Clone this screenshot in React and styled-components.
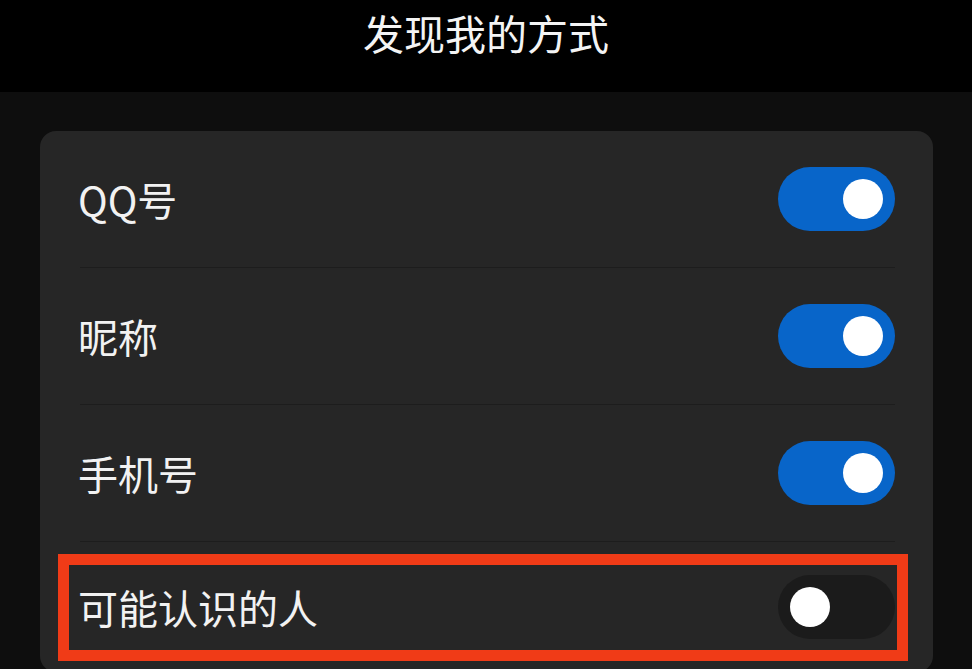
import React from 'react';
import styled, { createGlobalStyle } from 'styled-components';

const GlobalStyle = createGlobalStyle`
  html, body {
    margin: 0;
    padding: 0;
    background: #0e0e0e;
    overflow: hidden;
  }
  body {
    font-family: "Noto Sans CJK SC", "Noto Sans", sans-serif;
  }
`;

const Page = styled.div`
  width: 972px;
  height: 669px;
  background: #0e0e0e;
  overflow: hidden;
`;

const Header = styled.header`
  height: 92px;
  background: #000;
  display: flex;
  justify-content: center;
  align-items: flex-start;
`;

const Title = styled.h1`
  margin: 8px 0 0;
  font-size: 41px;
  font-weight: 400;
  line-height: 48px;
  color: #f4f4f4;
`;

const Body = styled.main`
  padding: 39px 39px 0 40px;
`;

const Card = styled.section`
  background: #262626;
  border-radius: 16px;
`;

const Row = styled.div`
  position: relative;
  height: ${(p) => (p.last ? '130px' : '136px')};
  margin: 0 38px 0 40px;
  display: flex;
  align-items: center;
  justify-content: space-between;
  border-top: ${(p) => (p.first ? 'none' : '1px solid #1d1d1d')};
`;

const Label = styled.span`
  margin-left: -2px;
  font-size: 40px;
  color: #f2f2f2;
  line-height: 1;
`;

const Track = styled.div`
  width: 117px;
  height: 64px;
  border-radius: 32px;
  background: ${(p) => (p.on ? '#0865c9' : '#1b1b1b')};
  display: flex;
  align-items: center;
  justify-content: ${(p) => (p.on ? 'flex-end' : 'flex-start')};
  padding: 0 12px;
  box-sizing: border-box;
`;

const Knob = styled.div`
  width: 40px;
  height: 40px;
  border-radius: 50%;
  background: #fff;
`;

const Highlight = styled.div`
  position: absolute;
  left: -22px;
  right: -13px;
  top: 12px;
  height: 107px;
  border: 11px solid #f03b17;
  box-sizing: border-box;
  pointer-events: none;
`;

const items = [
  { label: 'QQ号', on: true },
  { label: '昵称', on: true },
  { label: '手机号', on: true },
  { label: '可能认识的人', on: false, marked: true },
];

const Toggle = ({ on }) => (
  <Track on={on}>
    <Knob />
  </Track>
);

export default function App() {
  return (
    <Page>
      <GlobalStyle />
      <Header>
        <Title>发现我的方式</Title>
      </Header>
      <Body>
        <Card>
          {items.map((it, i) => (
            <Row key={it.label} first={i === 0} last={i === items.length - 1}>
              <Label>{it.label}</Label>
              <Toggle on={it.on} />
              {it.marked && <Highlight />}
            </Row>
          ))}
        </Card>
      </Body>
    </Page>
  );
}
